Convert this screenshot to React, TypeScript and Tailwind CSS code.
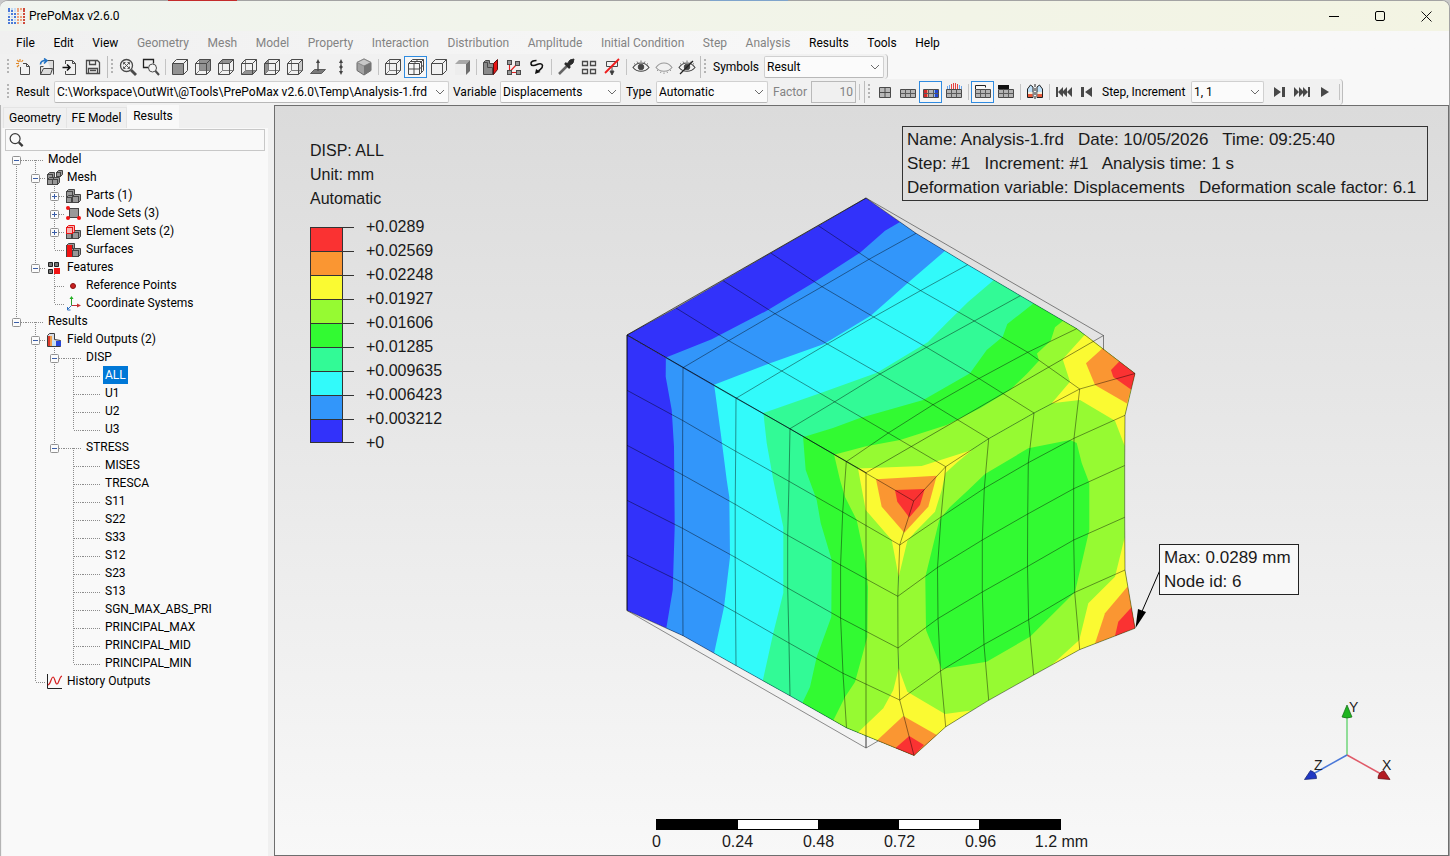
import { useState, type ReactNode } from 'react';
import clsx from 'clsx';

/* ---------- shared bits ---------- */

const RED = '#fa3232';
const ORANGE = '#fa9632';
const YELLOW = '#fafa32';
const LIME = '#96fa32';
const GREEN = '#32fa32';
const TEAL = '#32fa96';
const CYAN = '#32fafa';
const SKY = '#3296fa';
const BLUE = '#3232fa';

function Grip() {
  return (
    <svg width="8" height="18" viewBox="0 0 8 18" className="shrink-0" aria-hidden="true">
      {[1, 5, 9, 13].map((y) => (
        <rect key={y} x="3" y={y} width="2" height="2" fill="#b4b4b4" />
      ))}
    </svg>
  );
}

function Sep() {
  return (
    <span className="flex w-[6px] shrink-0 justify-center">
      <span className="h-4 w-px bg-[#c4c4c4]" />
    </span>
  );
}

function ToolButton({ label, active, children }: { label: string; active?: boolean; children: ReactNode }) {
  return (
    <button
      type="button"
      aria-label={label}
      className={clsx(
        'flex h-[22px] w-[23px] shrink-0 items-center justify-center border',
        active ? 'border-[#2f8be0] bg-[#f6f6f6]' : 'border-transparent hover:bg-[#d8e8f6]',
      )}
    >
      {children}
    </button>
  );
}

function Combo({ id, options, className }: { id: string; options: string[]; className: string }) {
  return (
    <span className={clsx('relative flex h-[22px] shrink-0', className)}>
      <select
        id={id}
        className="w-full appearance-none rounded-[2px] border border-[#d0d0d0] border-b-[#b8b8b8] bg-[#fbfbfb] pr-4 pl-[2px] text-xs text-black outline-none"
      >
        {options.map((o) => (
          <option key={o}>{o}</option>
        ))}
      </select>
      <svg width="10" height="6" viewBox="0 0 10 6" className="pointer-events-none absolute top-2 right-1" aria-hidden="true">
        <path d="M1 1l4 4 4-4" fill="none" stroke="#6b6b6b" />
      </svg>
    </span>
  );
}

/* ---------- toolbar icons ---------- */

function Icon({ children }: { children: ReactNode }) {
  return (
    <svg width="18" height="18" viewBox="0 0 18 18" fill="none" stroke="#4a4a4a" className="shrink-0" aria-hidden="true">
      {children}
    </svg>
  );
}

const cubeFaces: Record<string, string> = {
  front: '1.5,5.5 12.5,5.5 12.5,16.5 1.5,16.5',
  back: '5.5,1.5 16.5,1.5 16.5,12.5 5.5,12.5',
  top: '1.5,5.5 5.5,1.5 16.5,1.5 12.5,5.5',
  bottom: '1.5,16.5 5.5,12.5 16.5,12.5 12.5,16.5',
  left: '1.5,5.5 5.5,1.5 5.5,12.5 1.5,16.5',
  right: '12.5,5.5 16.5,1.5 16.5,12.5 12.5,16.5',
};

function CubeIcon({ face, wire = true }: { face?: string; wire?: boolean }) {
  return (
    <Icon>
      {face && <polygon points={cubeFaces[face]} fill={face === 'right' ? '#c9c9c9' : '#929292'} stroke="none" />}
      {wire && face !== 'front' && <path d="M5.5 1.5v11h11M5.5 12.5l-4 4" stroke="#7d7d7d" />}
      <path d="M1.5 5.5h11v11h-11zM1.5 5.5l4-4h11v11l-4 4M12.5 5.5l4-4" strokeLinejoin="round" />
    </Icon>
  );
}

const NewIcon = () => (
  <Icon>
    <path d="M5.5 9v7.5h9v-8l-3-3H8M11.5 5.5v3h3" />
    <path d="M5 1v3M1 5.5h3M2 2l2 2M8 2L6.500 4M2 9l2-2" stroke="#e08a2c" strokeWidth="1.2" />
  </Icon>
);
const OpenIcon = () => (
  <Icon>
    <path d="M2.5 16.5v-8h3M9 2.5h6.5v14M2.5 16.5l3-6h9l-2 6z" fill="#dcdcdc" />
    <path d="M2.5 6.5c0-3 2-4 5-4M6 .5l3 2-3 3" stroke="#2272c3" strokeWidth="1.6" />
  </Icon>
);
const ImportIcon = () => (
  <Icon>
    <path d="M4.5 6V2.5h7l3 3v11h-10V13M11.5 2.5v3h3" />
    <path d="M1.5 9.5h7M6 6.5l3 3-3 3" strokeWidth="1.5" stroke="#111" />
  </Icon>
);
const SaveIcon = () => (
  <Icon>
    <path d="M2.5 2.5h11l2 2v11h-13zM5.5 2.5v4h6v-4M4.5 15.5v-5h9v5M6 12.5h6" strokeWidth="1.3" />
  </Icon>
);
const FitIcon = () => (
  <Icon>
    <circle cx="7.5" cy="7.5" r="6" strokeWidth="1.3" />
    <path d="M12 12l5 5" strokeWidth="2.8" />
    <path d="M4.5 6.5v-2h2M8.5 4.5h2v2M10.5 8.5v2h-2M6.5 10.5h-2v-2M5 5l5 5M10 5l-5 5" strokeWidth="0.9" />
  </Icon>
);
const ZoomBoxIcon = () => (
  <Icon>
    <path d="M6 9.5H1.5v-8h10v4" stroke="#222" strokeWidth="1.3" />
    <circle cx="10.5" cy="10" r="4" fill="#f4f4f4" />
    <path d="M13.5 13l3.5 4" strokeWidth="2" />
  </Icon>
);
const NormalIcon = () => (
  <Icon>
    <path d="M1.5 15.5l4-4h11l-4 4z" fill="#7a7a7a" stroke="#5a5a5a" />
    <path d="M9 13V4" strokeWidth="1.4" />
    <path d="M9 1l2 4H7z" fill="#444" stroke="none" />
  </Icon>
);
const VerticalIcon = () => (
  <Icon>
    <path d="M9 3v12" strokeWidth="1.2" />
    <path d="M9 1l2 4H7zM9 17l2-4H7zM9 7l2 2-2 2-2-2z" fill="#444" stroke="none" />
  </Icon>
);
const IsoIcon = () => (
  <Icon>
    <path d="M9 1l7 3.5v8L9 17l-7-4.5v-8z" fill="#a2a2a2" stroke="#6a6a6a" />
    <path d="M2 4.5L9 8l7-3.5L9 1z" fill="#c8c8c8" stroke="#888" />
    <path d="M9 8l7-3.5v8L9 17z" fill="#757575" stroke="none" />
  </Icon>
);
const MeshCubeIcon = () => (
  <Icon>
    <path d="M1.5 5.5h11v11h-11zM1.5 5.5l4-4h11v11l-4 4M12.5 5.5l4-4M7 5.5v11M1.5 11h11M3.5 3.5h11v11M7 5.5l4-4M12.5 11l4-4" />
  </Icon>
);
const ShadedIcon = () => (
  <Icon>
    <path d="M2 6l4-4h11l-4 4z" fill="#a8a8a8" stroke="none" />
    <path d="M13 6l4-4v11l-4 4z" fill="#6e6e6e" stroke="none" />
    <path d="M2 6h11v11H2z" fill="#ededed" stroke="none" />
  </Icon>
);
const SectionIcon = () => (
  <Icon>
    <path d="M1.5 4.5l2-2h4v3h4v11h-10z" fill="#8a8a8a" />
    <path d="M1.5 4.5h4v5h5v7" />
    <path d="M11.5 5.5l4-4v10l-4 5z" fill="#e81414" stroke="#5a0f0f" />
  </Icon>
);
const ExplodeIcon = () => (
  <Icon>
    <path d="M4.5 5v9.5H13M4.5 14L12 6" stroke="#e02020" strokeWidth="1.1" />
    <rect x="2.5" y="2.5" width="4" height="4" fill="#999" />
    <rect x="10.5" y="3.5" width="4" height="4" fill="#999" />
    <rect x="2.5" y="12.5" width="4" height="4" fill="#999" />
    <rect x="11.5" y="12.5" width="4" height="4" fill="#999" />
  </Icon>
);
const FollowIcon = () => (
  <Icon>
    <path d="M8.5 2.5c-3 0-6 1-5.500 3.500s4 1.500 6 .5 5-1.500 5.500 1-2 3.500-4 5.500" stroke="#111" strokeWidth="1.6" />
    <path d="M7 16l1-5 4.500 3z" fill="#111" stroke="none" />
  </Icon>
);
const PickerIcon = () => (
  <Icon>
    <path d="M2 16l8-8" strokeWidth="2.5" stroke="#666" />
    <path d="M8 5l5 5" strokeWidth="2.5" stroke="#2a2a2a" />
    <path d="M10 6l3-4 4-1-1 4-4 3z" fill="#2a2a2a" stroke="#2a2a2a" />
  </Icon>
);
const GridIcon = () => (
  <Icon>
    <path d="M2.5 3.5h5v4h-5zM10.5 3.5h5v4h-5zM2.5 11.5h5v4h-5zM10.5 11.5h5v4h-5z" strokeWidth="1.3" />
  </Icon>
);
const NoAnnotationIcon = () => (
  <Icon>
    <path d="M3.5 3.5h11v5h-11zM9 9v7" />
    <path d="M9 17l-2-4h4z" fill="#333" />
    <path d="M2 15L16 1" stroke="#ee1c1c" strokeWidth="1.8" />
  </Icon>
);

function EyeIcon({ kind }: { kind: 'open' | 'closed' | 'off' }) {
  return (
    <Icon>
      <path d="M1 9.5c4-6 12-6 16 0-4 5-12 5-16 0z" stroke={kind === 'closed' ? '#999' : '#444'} strokeWidth="1.1" />
      {kind === 'closed' ? (
        <path d="M2 13l1-1M5.5 15l.5-1.5M9 16v-1.5M12.5 15l-.5-1.5M16 13l-1-1" stroke="#999" />
      ) : (
        <>
          <circle cx="9" cy="9" r="2.8" fill="#444" />
          <path d="M2 5.5l1.5 1M5 3.5L6 5M9 2.5V4M13 3.5L12 5M16 5.5l-1.5 1" stroke="#777" />
        </>
      )}
      {kind === 'off' && <path d="M2 16L15 3" strokeWidth="1.3" stroke="#222" />}
    </Icon>
  );
}

function PlateIcon({ kind }: { kind: 'square' | 'plain' | 'colored' | 'load' | 'outline' | 'dark' }) {
  if (kind === 'square') {
    return (
      <Icon>
        <path d="M3.5 4.5h11v10h-11zM9 4.5v10M3.5 9.5h11" fill="#b8b8b8" />
      </Icon>
    );
  }
  return (
    <Icon>
      <path d="M1.5 6.5h15v8h-15z" fill="#b4b4b4" />
      {kind === 'colored' && (
        <>
          <path d="M2 7h3v7H2z" fill="#d22a2a" stroke="none" />
          <path d="M5 7h2v7H5z" fill="#f0a080" stroke="none" />
          <path d="M11 7h2v7h-2z" fill="#86b4f2" stroke="none" />
          <path d="M13 7h3v7h-3z" fill="#2346d2" stroke="none" />
        </>
      )}
      <path d="M1.5 10.5h15M6.5 6.5v8M11.5 6.5v8" stroke="#5a5a5a" />
      {kind === 'load' && (
        <>
          <path d="M2.5 3v3M4.5 2v4M14.5 2v4M16.5 3v3" stroke="#6aa5ea" />
          <path d="M6.5 1v5M8.5 0v6M10.5 0v6M12.5 1v5" stroke="#e84040" />
        </>
      )}
      {kind === 'outline' && <path d="M1.5 6V2.5h10v2" stroke="#222" />}
      {kind === 'dark' && <path d="M1 2h11v4H1z" fill="#111" stroke="none" />}
    </Icon>
  );
}

const MirrorIcon = () => (
  <Icon>
    <path d="M1.5 14.5V6l3-4L7 4v10.5z" fill="#bfe0f8" stroke="#222" />
    <path d="M16.5 14.5V6l-3-4L11 4v10.5z" fill="#bfe0f8" stroke="#222" />
    <path d="M2 11h4.5v3H2zM11.5 11H16v3h-4.5z" fill="#e85a3a" stroke="none" />
    <path d="M2 9h4.5v2H2zM11.5 9H16v2h-4.5z" fill="#f8f0dc" stroke="none" />
    <path d="M9 1v16" strokeDasharray="3 1" stroke="#222" />
  </Icon>
);

function PlayerIcon({ d }: { d: string }) {
  return (
    <Icon>
      <path d={d} fill="#484848" stroke="none" />
    </Icon>
  );
}

/* ---------- window chrome ---------- */

function AppLogo() {
  const rows = ['b..bb.', 'bb.b.b', '.bbb.b', 'b.bbbb', 'bb.bb.', 'bbbb.b'];
  const tint = (c: string, x: number) => {
    if (x < 3) return c === 'b' ? '#4a7ad8' : '#c4dbf4';
    if (x === 5) return '#cf4a3c';
    return c === 'b' ? '#eda27c' : '#f8e4d6';
  };
  return (
    <svg width="17" height="16" viewBox="0 0 17 16" className="shrink-0" aria-hidden="true">
      {rows.map((row, y) =>
        row.split('').map((c, x) => (
          <rect key={`${x}-${y}`} x={x * 3} y={Math.max(0, y * 3 - 1)} width="2" height="2" fill={tint(c, x)} />
        )),
      )}
    </svg>
  );
}

function TitleBar() {
  return (
    <header className="flex h-[30px] items-stretch bg-linear-to-r from-[#f0f4ef] to-[#f3f4e3] pl-2 text-xs">
      <div className="flex grow items-center gap-1">
        <AppLogo />
        <h1>PrePoMax v2.6.0</h1>
      </div>
      <button type="button" aria-label="Minimize" className="flex w-[46px] items-center justify-center">
        <span className="h-px w-[10px] bg-black" />
      </button>
      <button type="button" aria-label="Maximize" className="flex w-[46px] items-center justify-center">
        <span className="size-[10px] rounded-[2px] border border-black" />
      </button>
      <button type="button" aria-label="Close" className="flex w-[46px] items-center justify-center">
        <svg width="11" height="11" viewBox="0 0 11 11">
          <path d="M.5.5l10 10M10.5.5l-10 10" stroke="#111" />
        </svg>
      </button>
    </header>
  );
}

const menus = [
  { name: 'File', on: true },
  { name: 'Edit', on: true },
  { name: 'View', on: true },
  { name: 'Geometry' },
  { name: 'Mesh' },
  { name: 'Model' },
  { name: 'Property' },
  { name: 'Interaction' },
  { name: 'Distribution' },
  { name: 'Amplitude' },
  { name: 'Initial Condition' },
  { name: 'Step' },
  { name: 'Analysis' },
  { name: 'Results', on: true },
  { name: 'Tools', on: true },
  { name: 'Help', on: true },
];

function MenuBar() {
  return (
    <nav className="h-[23px] bg-linear-to-r from-[#f0f0f0] to-[#f8f8f8] to-60% pl-[7px]">
      <div className="flex h-full max-w-[941px] items-center justify-between">
        {menus.map((m) => (
          <button key={m.name} type="button" disabled={!m.on} className="px-2 text-xs whitespace-nowrap text-black first:pl-[9px] disabled:text-[#838383]">
            {m.name}
          </button>
        ))}
      </div>
    </nav>
  );
}

function MainToolbar() {
  return (
    <div className="flex h-[25px] w-fit items-center rounded-r-sm border-r border-[#bdbdbd] bg-[#f1f1f1] pr-[3px] pl-1">
      <Grip />
      <ToolButton label="New"><NewIcon /></ToolButton>
      <ToolButton label="Open"><OpenIcon /></ToolButton>
      <ToolButton label="Import"><ImportIcon /></ToolButton>
      <ToolButton label="Save"><SaveIcon /></ToolButton>
      <span className="ml-[3px] h-[22px] w-px bg-[#bdbdbd]" />
      <Grip />
      <ToolButton label="Zoom to fit"><FitIcon /></ToolButton>
      <ToolButton label="Zoom box"><ZoomBoxIcon /></ToolButton>
      <Sep />
      {['front', 'back', 'top', 'bottom', 'left', 'right'].map((face) => (
        <ToolButton key={face} label={`${face} view`}>
          <CubeIcon face={face} />
        </ToolButton>
      ))}
      <ToolButton label="Normal view"><NormalIcon /></ToolButton>
      <ToolButton label="Vertical view"><VerticalIcon /></ToolButton>
      <ToolButton label="Isometric view"><IsoIcon /></ToolButton>
      <Sep />
      <ToolButton label="Wireframe"><CubeIcon /></ToolButton>
      <ToolButton label="Element edges" active><MeshCubeIcon /></ToolButton>
      <ToolButton label="Model edges"><CubeIcon wire={false} /></ToolButton>
      <ToolButton label="No edges"><ShadedIcon /></ToolButton>
      <Sep />
      <ToolButton label="Section view"><SectionIcon /></ToolButton>
      <ToolButton label="Exploded view"><ExplodeIcon /></ToolButton>
      <ToolButton label="Follower view"><FollowIcon /></ToolButton>
      <Sep />
      <ToolButton label="Query"><PickerIcon /></ToolButton>
      <ToolButton label="Arrange"><GridIcon /></ToolButton>
      <ToolButton label="Remove annotations"><NoAnnotationIcon /></ToolButton>
      <Sep />
      <ToolButton label="Show all"><EyeIcon kind="open" /></ToolButton>
      <ToolButton label="Hide"><EyeIcon kind="closed" /></ToolButton>
      <ToolButton label="Invert visible"><EyeIcon kind="off" /></ToolButton>
      <span className="ml-[2px] h-[22px] w-px bg-[#bdbdbd]" />
      <Grip />
      <label htmlFor="symbols" className="w-[55px] shrink-0 pl-1 text-xs">Symbols</label>
      <Combo id="symbols" options={['Result', 'None']} className="w-[120px]" />
    </div>
  );
}

function ResultsToolbar() {
  return (
    <div className="flex h-[26px] w-fit items-center rounded-r-sm border-r border-[#bdbdbd] bg-[#f1f1f1] pl-1">
      <Grip />
      <label htmlFor="result" className="w-[42px] shrink-0 pl-1 text-xs">Result</label>
      <Combo id="result" options={['C:\\Workspace\\OutWit\\@Tools\\PrePoMax v2.6.0\\Temp\\Analysis-1.frd']} className="w-[395px]" />
      <label htmlFor="variable" className="w-[51px] shrink-0 pl-1 text-xs">Variable</label>
      <Combo id="variable" options={['Displacements', 'Stresses']} className="w-[121px]" />
      <label htmlFor="type" className="w-[35px] shrink-0 pl-[5px] text-xs">Type</label>
      <Combo id="type" options={['Automatic', 'True scale', 'Off']} className="w-[112px]" />
      <label htmlFor="factor" className="w-[43px] shrink-0 pl-[5px] text-xs text-[#838383]">Factor</label>
      <input id="factor" disabled defaultValue="10" className="h-[22px] w-[45px] border border-[#b9b9b9] bg-[#f0f0f0] pr-[2px] text-right text-xs text-[#838383]" />
      <Sep />
      <span className="ml-[2px] h-[22px] w-px bg-[#bdbdbd]" />
      <Grip />
      <ToolButton label="Undeformed"><PlateIcon kind="square" /></ToolButton>
      <ToolButton label="Deformed"><PlateIcon kind="plain" /></ToolButton>
      <ToolButton label="Color contours" active><PlateIcon kind="colored" /></ToolButton>
      <ToolButton label="Vectors"><PlateIcon kind="load" /></ToolButton>
      <Sep />
      <ToolButton label="Undeformed wireframe" active><PlateIcon kind="outline" /></ToolButton>
      <ToolButton label="Undeformed solid"><PlateIcon kind="dark" /></ToolButton>
      <Sep />
      <ToolButton label="Transformation"><MirrorIcon /></ToolButton>
      <Sep />
      <ToolButton label="First increment"><PlayerIcon d="M1 4h2v10H1zM3 9l5-5v10zM7 9l5-5v10zM12 9l5-5v10z" /></ToolButton>
      <ToolButton label="Previous increment"><PlayerIcon d="M3 4h3v10H3zM7 9l7-5v10z" /></ToolButton>
      <label htmlFor="increment" className="w-[93px] shrink-0 pl-1 text-xs">Step, Increment</label>
      <Combo id="increment" options={['1, 1']} className="mr-[3px] w-[73px]" />
      <ToolButton label="Next increment"><PlayerIcon d="M12 4h3v10h-3zM4 4l7 5-7 5z" /></ToolButton>
      <ToolButton label="Last increment"><PlayerIcon d="M15 4h2v10h-2zM1 4l5 5-5 5zM6 4l5 5-5 5zM10 4l5 5-5 5z" /></ToolButton>
      <ToolButton label="Animate"><PlayerIcon d="M5 4l8 5-8 5z" /></ToolButton>
      <Sep />
    </div>
  );
}

/* ---------- model tree ---------- */

type TreeNode = { label: string; icon?: ReactNode; closed?: boolean; children?: TreeNode[] };

function Block({ x, y, s = 6, fill = '#989898', stroke = '#444' }: { x: number; y: number; s?: number; fill?: string; stroke?: string }) {
  return (
    <g stroke={stroke}>
      <path d={`M${x} ${y}l2 -2h${s}v${s}l-2 2z`} fill={fill} />
      <rect x={x} y={y} width={s} height={s} fill={fill} />
    </g>
  );
}

const meshIcon = (
  <>
    <Block x={1.5} y={5.5} s={5} />
    <Block x={1.5} y={10.5} s={5} />
    <Block x={6.5} y={10.5} s={5} />
    <Block x={10.5} y={3.5} s={4} />
  </>
);
const partsIcon = (
  <>
    <Block x={1.5} y={4.5} />
    <Block x={1.5} y={10.5} s={5} />
    <Block x={7.5} y={9.5} />
  </>
);
const nodeIcon = (
  <>
    <rect x="4.5" y="3.5" width="9" height="9" fill="#999" stroke="#444" />
    {[[3, 3], [3, 13], [14, 13]].map(([cx, cy]) => (
      <circle key={`${cx}-${cy}`} cx={cx} cy={cy} r="2" fill="#f01414" />
    ))}
  </>
);
const elementIcon = (
  <>
    <Block x={1.5} y={10.5} s={5} />
    <Block x={7.5} y={9.5} />
    <Block x={1.5} y={4.5} fill="#f7b4b4" stroke="#e81414" />
  </>
);
const surfaceIcon = (
  <>
    <Block x={1.5} y={4.5} />
    <Block x={1.5} y={9.5} />
    <Block x={7.5} y={9.5} />
    <rect x="2" y="4" width="5" height="12" fill="#f01414" />
  </>
);
const featureIcon = (
  <>
    <path d="M2.5 3.5h4v4h-4zM8.5 3.5h4v4h-4zM2.5 10.5h4v4h-4z" fill="#777" stroke="#222" />
    <rect x="8" y="9" width="6" height="6" fill="#f01414" />
  </>
);
const pointIcon = <circle cx="8" cy="9" r="2.5" fill="#c82020" stroke="#8a1010" />;
const axesIcon = (
  <>
    <path d="M6.5 10.5V3" stroke="#2a9c2a" />
    <path d="M6.5 1l2 3h-4z" fill="#22b022" />
    <path d="M6.5 10.5H14" stroke="#c03030" />
    <path d="M12 8.5l4 2-4 2z" fill="#c83030" />
    <path d="M6.5 10.5l-4 4" stroke="#3070c0" />
    <path d="M2.5 12v3h3" stroke="#3070c0" fill="none" />
  </>
);
const fieldIcon = (
  <>
    <path d="M1.5 4.5l2-2h5v6l6 1v6h-13z" fill="#d8dde6" stroke="#3c3c3c" />
    <path d="M2 5h2v10H2z" fill="#dc3a2a" />
    <path d="M4 5h2v10H4z" fill="#f2a04a" />
    <path d="M6 10h3v5H6z" fill="#bfe0f8" />
    <path d="M10 10h5v5h-5z" fill="#2846d8" />
  </>
);
const historyIcon = (
  <>
    <path d="M1.5 1v14.5H16" stroke="#222" fill="none" />
    <path d="M2 12c3-1 3-8 5-8s2 7 4 7 2-7 5-8" stroke="#d42020" fill="none" strokeWidth="1.2" />
  </>
);

const tree: TreeNode[] = [
  {
    label: 'Model',
    children: [
      {
        label: 'Mesh',
        icon: meshIcon,
        children: [
          { label: 'Parts (1)', icon: partsIcon, closed: true },
          { label: 'Node Sets (3)', icon: nodeIcon, closed: true },
          { label: 'Element Sets (2)', icon: elementIcon, closed: true },
          { label: 'Surfaces', icon: surfaceIcon },
        ],
      },
      {
        label: 'Features',
        icon: featureIcon,
        children: [
          { label: 'Reference Points', icon: pointIcon },
          { label: 'Coordinate Systems', icon: axesIcon },
        ],
      },
    ],
  },
  {
    label: 'Results',
    children: [
      {
        label: 'Field Outputs (2)',
        icon: fieldIcon,
        children: [
          { label: 'DISP', children: ['ALL', 'U1', 'U2', 'U3'].map((label) => ({ label })) },
          {
            label: 'STRESS',
            children: [
              'MISES', 'TRESCA', 'S11', 'S22', 'S33', 'S12', 'S23', 'S13',
              'SGN_MAX_ABS_PRI', 'PRINCIPAL_MAX', 'PRINCIPAL_MID', 'PRINCIPAL_MIN',
            ].map((label) => ({ label })),
          },
        ],
      },
      { label: 'History Outputs', icon: historyIcon },
    ],
  },
];

const dots = { stroke: '#8c8c8c', strokeDasharray: '1 1' };

type TreeRowsProps = {
  nodes: TreeNode[];
  guides?: boolean[];
  selected: string;
  onSelect: (label: string) => void;
};

function TreeRows({ nodes, guides = [], selected, onSelect }: TreeRowsProps) {
  return (
    <>
      {nodes.map((n, i) => {
        const last = i === nodes.length - 1;
        const root = guides.length === 0 && i === 0;
        const box = n.closed || n.children;
        return (
          <li key={n.label}>
            <div className="flex h-[18px] items-center">
              {guides.map((g, k) => (
                <svg key={k} width="19" height="18" className="shrink-0" aria-hidden="true">
                  {g && <path d="M9.5 0v18" {...dots} />}
                </svg>
              ))}
              <svg width="19" height="18" className="shrink-0" aria-hidden="true">
                <path d={`M9.5 ${root ? 10 : 0}V${last ? 10 : 18}M10 10.5h9`} {...dots} />
                {box && (
                  <>
                    <rect x="5.5" y="6.5" width="8" height="8" rx="1" fill="#fbfbfb" stroke="#919191" />
                    <path d={n.closed ? 'M7 10.5h5M9.5 8v5' : 'M7 10.5h5'} stroke="#3a5ea8" />
                  </>
                )}
              </svg>
              <svg width="20" height="18" className="shrink-0" aria-hidden="true">
                {!n.icon && <path d="M0 10.5h17" {...dots} />}
                {n.children && <path d="M9.5 10v8" {...dots} />}
                {n.icon && <g transform="translate(1 1)">{n.icon}</g>}
              </svg>
              <button
                type="button"
                onClick={() => onSelect(n.label)}
                className={clsx('px-[2px] text-xs leading-[18px] whitespace-nowrap', selected === n.label && 'bg-[#0078d7] text-white')}
              >
                {n.label}
              </button>
            </div>
            {n.children && (
              <ul>
                <TreeRows nodes={n.children} guides={[...guides, !last]} selected={selected} onSelect={onSelect} />
              </ul>
            )}
          </li>
        );
      })}
    </>
  );
}

function SidePanel() {
  const [selected, setSelected] = useState('ALL');
  return (
    <aside className="flex w-[274px] shrink-0 flex-col border-l border-[#b4b4b4] bg-[#f0f0f0] pr-[6px] pl-px">
      <div role="tablist" className="flex h-[23px] items-end pl-px">
        <button type="button" role="tab" className="h-[21px] w-[64px] border border-b-0 border-[#e4e4e4] text-xs">Geometry</button>
        <button type="button" role="tab" className="h-[21px] w-[60px] border border-b-0 border-l-0 border-[#e4e4e4] text-xs whitespace-nowrap">FE Model</button>
        <button type="button" role="tab" aria-selected="true" className="h-[23px] w-[52px] bg-[#f9f9f9] pb-[2px] text-xs">Results</button>
      </div>
      <div className="grow bg-[#f9f9f9] px-[3px] pt-px">
        <label className="flex h-[22px] items-center border border-[#c8c8c8] pl-[3px]">
          <svg width="16" height="16" viewBox="0 0 16 16" fill="none" stroke="#3a3a3a" aria-hidden="true">
            <circle cx="6.5" cy="6.5" r="5.3" strokeWidth="1.3" />
            <path d="M10.5 10.5l4 4" strokeWidth="2.4" />
          </svg>
          <input type="search" aria-label="Filter tree" className="w-full bg-transparent px-1 text-xs outline-none" />
        </label>
        <ul className="-mt-px pl-[2px]">
          <TreeRows nodes={tree} selected={selected} onSelect={setSelected} />
        </ul>
      </div>
    </aside>
  );
}

/* ---------- 3D view ---------- */

// node positions, projected to the screen: rows run away from the fixed face
const topGrid = [
  [[627, 335], [676, 308], [723, 280.7], [770.7, 253], [818.3, 225.7], [866, 198]],
  [[683, 367.7], [728.7, 340.7], [775, 313.7], [822, 286.7], [869, 259.3], [916, 233.3]],
  [[736, 398.3], [781.7, 371], [827.3, 344], [873.7, 317], [920.6, 290.6], [967.7, 264.7]],
  [[790, 428.7], [834.7, 401.8], [880, 374], [926.5, 347.3], [974.3, 321], [1020.3, 295.7]],
  [[846.3, 461.7], [888.3, 433], [933, 404.7], [979, 378.5], [1027.7, 352.3], [1076.7, 328.7]],
  [[913.7, 501], [945.7, 466.7], [988.7, 438.7], [1034, 413], [1079.7, 389], [1135, 373.5]],
];
const leftGrid = [
  [[627, 335], [627, 390.3], [627, 445.3], [627, 500.3], [627, 555.3], [627, 610.5]],
  [[683, 367.7], [682.7, 420.5], [682.5, 474.8], [682.5, 528.3], [682.7, 582.7], [683, 635.7]],
  [[736, 398.3], [735.7, 451.3], [735.2, 504.3], [735.2, 557.3], [735.6, 612.3], [736, 665.6]],
  [[790, 428.7], [789, 481.3], [787.7, 535.3], [787.7, 588], [789, 643], [790, 695.8]],
  [[846.3, 461.7], [842.7, 512], [840.6, 565], [840.6, 618], [843, 673.3], [846.5, 727.8]],
  [[913.7, 501], [899.7, 545], [897.8, 596.3], [898, 648], [899.7, 700], [914, 755.5]],
];
const rightGrid = [
  leftGrid[5],
  [[945.7, 466.7], [941, 517], [937.5, 567.5], [938, 618.5], [940.5, 671], [945.7, 726.8]],
  [[988.7, 438.7], [984.3, 488.3], [982.3, 540], [982.3, 592], [984, 644.5], [988.7, 700.3]],
  [[1034, 413], [1028.3, 462.7], [1027.7, 514], [1027.5, 566.5], [1028.6, 619.7], [1033.7, 675]],
  [[1079.7, 389], [1074, 438.3], [1073.7, 488.7], [1073.7, 540], [1074.7, 592.4], [1079.7, 649.6]],
  [[1135, 373.5], [1125, 415.3], [1124.7, 465.5], [1124.7, 517.3], [1125, 570], [1135, 628.3]],
];

const poly = (pts: number[][]) => pts.map((p) => p.join(',')).join(' ');

// from / fromCol leave out the edges that a neighbouring face has drawn already
function MeshLines({ grid, from = 0, fromCol = 0 }: { grid: number[][][]; from?: number; fromCol?: number }) {
  const cols = grid[0].map((_, k) => grid.map((row) => row[k]));
  return (
    <g fill="none" stroke="#000" strokeOpacity="0.42">
      {[...grid.slice(from), ...cols.slice(fromCol)].map((line, i) => (
        <polyline key={i} points={poly(line)} />
      ))}
    </g>
  );
}

const outline = (grid: number[][][]) => [
  ...grid.map((r) => r[0]),
  ...grid[5].slice(1),
  ...grid.map((r) => r[5]).reverse().slice(1),
  ...[...grid[0]].reverse().slice(1, 5),
];

// each band covers everything from its lower limit up to the free corner
const topBands: [string, string][] = [
  [SKY, '666,357.5 711.7,339.3 766.7,310.7 815,281.7 860,252.7 885,230.7 900,222 1300,300 1300,700 900,700'],
  [CYAN, '713.5,385 770,363.3 824,344 871,315.5 910,281 946,250 1300,300 1300,700 900,700'],
  [TEAL, '762,413.5 820,393.3 877,372.7 928,342 946.7,323 968,302 995,279 1300,300 1300,700 900,700'],
  [GREEN, '802,437.5 833,428 860,418 923.3,400 970,373.3 986.7,350 1002.7,336.7 1007.3,324 1034,303 1300,300 1300,700 900,700'],
  [LIME, '833,455 865,446.5 900,440 946.7,425 980,408.3 1010,390 1026.7,374 1039,360.7 1037,353.5 1050.7,340.7 1055,327.3 1064,320 1300,300 1300,700 900,700'],
];
const leftBands: [string, string][] = [
  [SKY, '666,340 665.7,376.7 671.7,410 674,446.7 674.7,526.7 672.7,590 666,630 666,900 1200,900 1200,340'],
  [CYAN, '713.5,380 720.7,433 726.7,480 729.3,497 730,557 724,607 713.5,656 713.5,900 1200,900 1200,340'],
  [TEAL, '762.5,405 766.7,443 773.3,480 783.3,527 783.3,593 773.3,633 762.5,682 762.5,900 1200,900 1200,340'],
  [GREEN, '802.5,430 805.7,470 816.7,500 820.7,523 831.7,560 831.3,617 816.7,657 810,687 800,708 800,900 1200,900 1200,340'],
  [LIME, '833,450 840,480 845,497 856.7,520 865.7,563 868,587 867.3,637 855,682 845,697 832,723 832,900 1200,900 1200,340'],
];

// closed patches that run over the cube's edges
const patches: [string, string][] = [
  [GREEN, '968.3,490 985,474 1028.3,448.3 1070,440 1076.7,443 1081.7,463 1089.3,483 1089.3,530 1075,592 1030,636.7 986.7,661.7 941.7,669 926,630 925.3,577 939.3,520 950,507'],
  [YELLOW, '858,468.5 921.7,466 972,450 956.7,462.7 945.5,473 941.7,490 935,511.7 915,532 907.3,541 898.7,577 891.7,540 865.7,510'],
  [ORANGE, '876,479.3 936.7,475.7 928.3,506.7 904.3,532.7 881.7,506.7'],
  [RED, '895,490 924.7,489 920,505 909.3,517.5 897.3,501.7'],
  [YELLOW, '1085,334.5 1062.7,359.3 1070,381.7 1051.7,403.3 1080,400 1115,420.7 1124.7,446 1125,415 1135,373.5'],
  [ORANGE, '1102.3,348.5 1086,363.3 1095,385 1127,403.5 1135,373.5'],
  [RED, '1119.3,361.5 1111,370 1113.3,377 1131,389.5 1135,373.5'],
  [YELLOW, '1051.7,665 1079.3,640 1088.3,603.3 1115,576.7 1124.7,537.3 1125,570 1135,628 1079.7,649.5'],
  [ORANGE, '1095,643.5 1105,613.3 1127.6,586.5 1135,628'],
  [RED, '1115,636 1118.3,621.7 1131.3,607.5 1135,628'],
  [YELLOW, '858,732.5 883.3,708.3 893.3,690 898.7,668.3 907.3,691.7 945,714 971,710.5 945.7,727 914,755.5'],
  [ORANGE, '877,740.5 903.3,716 936.7,735 914,755.5'],
  [RED, '895.5,748 909.3,736 924,745 914,755.5'],
];

function ResultPlot() {
  return (
    <svg viewBox="275 106 1173 749" className="size-full" role="img" aria-label="Displacement contours on the deformed part">
      <defs>
        <clipPath id="top"><polygon points={poly(outline(topGrid))} /></clipPath>
        <clipPath id="left"><polygon points={poly(outline(leftGrid))} /></clipPath>
      </defs>

      <path d="M627 610.5L866 748l237.5-138M866 748V473" stroke="#8a8a8a" fill="none" />

      <g clipPath="url(#top)">
        <polygon points={poly(outline(topGrid))} fill={BLUE} />
        {topBands.map(([fill, points]) => <polygon key={fill} points={points} fill={fill} />)}
      </g>
      <g clipPath="url(#left)">
        <polygon points={poly(outline(leftGrid))} fill={BLUE} />
        {leftBands.map(([fill, points]) => <polygon key={fill} points={points} fill={fill} />)}
      </g>
      <polygon points={poly(outline(rightGrid))} fill={LIME} />
      {patches.map(([fill, points]) => <polygon key={points} points={points} fill={fill} />)}

      <MeshLines grid={topGrid} />
      <MeshLines grid={leftGrid} fromCol={1} />
      <MeshLines grid={rightGrid} from={1} fromCol={1} />

      {/* undeformed edges */}
      <g fill="none" stroke="#000" strokeOpacity="0.45">
        <path d="M866 748V472.7L1103.5 335.5M866 198l237.5 137.5v14" />
        <path d="M627 610.5V335L866 198M627 335l239 137.7" strokeOpacity="0.65" />
      </g>

      <path d="M1160 570l-20 46" stroke="#000" />
      <path d="M1135.5 628l2.5-19 8 3z" fill="#000" />

      {/* orientation triad */}
      <g strokeWidth="1.5">
        <path d="M1347 755v-40" stroke="#6fd67a" />
        <path d="M1347 755l34 19" stroke="#e05a68" />
        <path d="M1347 755l-34 19" stroke="#4a78d8" />
      </g>
      <path d="M1347 705l5 12q-5 2-10 0z" fill="#1fb41f" stroke="#126812" strokeWidth="0.7" />
      <path d="M1390 779.5l-12-1q0-6 6-8z" fill="#b31c22" stroke="#5e0c10" strokeWidth="0.7" />
      <path d="M1304.5 779.5l12-1q0-6-6-8z" fill="#2038c4" stroke="#101c6a" strokeWidth="0.7" />
      <g fill="#222" className="font-['Liberation_Sans'] text-[14px]">
        <text x="1349" y="712">Y</text>
        <text x="1382" y="770">X</text>
        <text x="1314" y="770">Z</text>
      </g>
    </svg>
  );
}

const legendColors = ['bg-[#fa3232]', 'bg-[#fa9632]', 'bg-[#fafa32]', 'bg-[#96fa32]', 'bg-[#32fa32]', 'bg-[#32fa96]', 'bg-[#32fafa]', 'bg-[#3296fa]', 'bg-[#3232fa]'];
const legendValues = ['+0.0289', '+0.02569', '+0.02248', '+0.01927', '+0.01606', '+0.01285', '+0.009635', '+0.006423', '+0.003212', '+0'];

function Legend() {
  return (
    <section className="absolute top-[33px] left-[35px] leading-6">
      <p>DISP: ALL</p>
      <p>Unit: mm</p>
      <p>Automatic</p>
      <div className="mt-1 flex">
        <div className="mt-3">
          {legendColors.map((c, i) => (
            <div key={c} className="flex h-6">
              <span className={clsx('w-[33px] border-x border-t border-[#333]', c, i === 8 && 'border-b')} />
              <span className={clsx('w-[11px] border-t border-[#333]', i === 8 && 'border-b')} />
            </div>
          ))}
        </div>
        <ul className="pl-3">
          {legendValues.map((v) => <li key={v}>{v}</li>)}
        </ul>
      </div>
    </section>
  );
}

function ScaleBar() {
  return (
    <section className="absolute bottom-px left-[341px] w-[486px] leading-6">
      <div className="ml-10 flex h-[11px] w-[405px] border border-black">
        {['bg-black', 'bg-white', 'bg-black', 'bg-white', 'bg-black'].map((c, i) => (
          <span key={i} className={clsx('grow', c)} />
        ))}
      </div>
      <ul className="flex">
        {['0', '0.24', '0.48', '0.72', '0.96', '1.2 mm'].map((t) => (
          <li key={t} className="w-[81px] text-center whitespace-nowrap">{t}</li>
        ))}
      </ul>
    </section>
  );
}

function Viewport() {
  return (
    <main className="relative min-w-0 grow overflow-hidden border border-[#6e6e6e] bg-linear-to-b from-[#dbdbdb] to-[#f8f8f8] font-['Liberation_Sans',sans-serif] text-[16px] text-[#1a1a1a]">
      <div className="absolute inset-0"><ResultPlot /></div>
      <Legend />
      <section className="absolute top-[20px] right-[20px] w-[526px] border border-[#333] px-1 pt-px text-[17px] leading-6 whitespace-pre">
        <p>Name: Analysis-1.frd   Date: 10/05/2026   Time: 09:25:40</p>
        <p>Step: #1   Increment: #1   Analysis time: 1 s</p>
        <p>Deformation variable: Displacements   Deformation scale factor: 6.1</p>
      </section>
      <section className="absolute top-[438px] left-[884px] w-[140px] border border-[#222] bg-[#f8f8f8] px-1 pt-px text-[17px] leading-6">
        <p>Max: 0.0289 mm</p>
        <p>Node id: 6</p>
      </section>
      <ScaleBar />
    </main>
  );
}

export default function App() {
  return (
    <div className="relative h-screen bg-[#c9c9c9] font-['Roboto',sans-serif] text-black">
      <div className="flex h-full flex-col overflow-hidden rounded-t-lg border-t border-r border-[#a3a3a3] bg-[#f8f8f8]">
        <TitleBar />
        <MenuBar />
        <MainToolbar />
        <ResultsToolbar />
        <div className="flex min-h-0 grow">
          <SidePanel />
          <Viewport />
        </div>
      </div>
      {/* slivers of the window behind */}
      <span className="absolute top-0 left-[168px] h-px w-[69px] bg-[#c42b2b]" />
      <span className="absolute top-0 left-[710px] h-px w-[78px] bg-[#7fa4cc]" />
    </div>
  );
}
